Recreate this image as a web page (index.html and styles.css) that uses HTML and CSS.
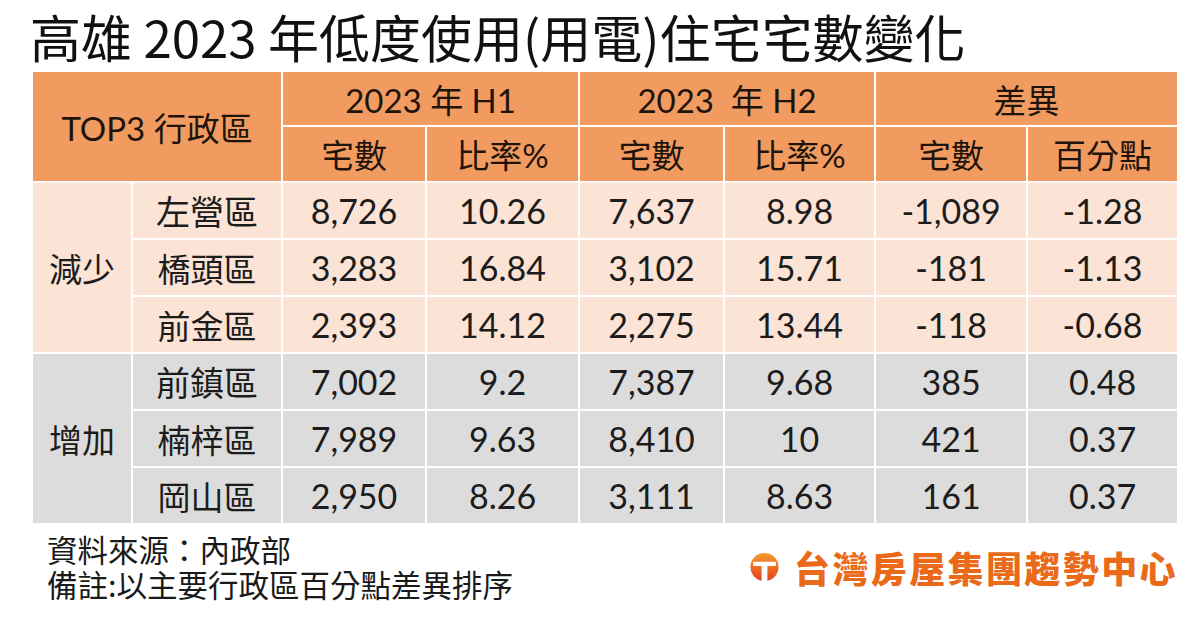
FILE: index.html
```html
<!DOCTYPE html>
<html lang="zh-Hant">
<head>
<meta charset="utf-8">
<link rel="stylesheet" href="styles.css">
</head>
<body>
<div class="page">
  <h1 class="title">高雄 2023 年低度使用(用電)住宅宅數變化</h1>
  <table class="data">
    <colgroup>
      <col style="width:100px"><col style="width:150px">
      <col style="width:144px"><col style="width:153px">
      <col style="width:145px"><col style="width:151px">
      <col style="width:152px"><col style="width:151px">
    </colgroup>
    <thead>
      <tr class="h1row">
        <th colspan="2" rowspan="2">TOP3 行政區</th>
        <th colspan="2">2023 年 H1</th>
        <th colspan="2">2023&nbsp; 年 H2</th>
        <th colspan="2">差異</th>
      </tr>
      <tr class="h2row">
        <th>宅數</th><th>比率%</th>
        <th>宅數</th><th>比率%</th>
        <th>宅數</th><th>百分點</th>
      </tr>
    </thead>
    <tbody class="dec">
      <tr><td rowspan="3" class="grp">減少</td><td>左營區</td><td>8,726</td><td>10.26</td><td>7,637</td><td>8.98</td><td>-1,089</td><td>-1.28</td></tr>
      <tr><td>橋頭區</td><td>3,283</td><td>16.84</td><td>3,102</td><td>15.71</td><td>-181</td><td>-1.13</td></tr>
      <tr><td>前金區</td><td>2,393</td><td>14.12</td><td>2,275</td><td>13.44</td><td>-118</td><td>-0.68</td></tr>
    </tbody>
    <tbody class="inc">
      <tr><td rowspan="3" class="grp">增加</td><td>前鎮區</td><td>7,002</td><td>9.2</td><td>7,387</td><td>9.68</td><td>385</td><td>0.48</td></tr>
      <tr><td>楠梓區</td><td>7,989</td><td>9.63</td><td>8,410</td><td>10</td><td>421</td><td>0.37</td></tr>
      <tr><td>岡山區</td><td>2,950</td><td>8.26</td><td>3,111</td><td>8.63</td><td>161</td><td>0.37</td></tr>
    </tbody>
  </table>
  <div class="footer">
    <div class="notes">
      <p>資料來源：內政部</p>
      <p>備註:以主要行政區百分點差異排序</p>
    </div>
    <div class="logo">
      <svg class="logo-mark" width="29" height="30" viewBox="0 0 30 30" aria-hidden="true">
        <defs>
          <linearGradient id="lg" x1="0" y1="0" x2="0" y2="1">
            <stop offset="0" stop-color="#F79A2E"/>
            <stop offset="1" stop-color="#E0451C"/>
          </linearGradient>
        </defs>
        <circle cx="15" cy="15" r="14.5" fill="url(#lg)"/>
        <path d="M3.2 9.5 H26.8 V14 H18 V29.6 H12 V14 H3.2 Z" fill="#fff"/>
      </svg>
      <span class="logo-text">台灣房屋集團趨勢中心</span>
    </div>
  </div>
</div>
</body>
</html>
```

FILE: styles.css
```css
html, body {
  margin: 0;
  padding: 0;
  background: #ffffff;
}

.page {
  width: 1200px;
  height: 620px;
  padding: 7px 0 0 0;
  box-sizing: border-box;
  font-family: "Lato", "Noto Sans CJK TC", sans-serif;
  color: #1c1c1c;
}

.title {
  margin: 0 0 0 30px;
  font-family: "Noto Sans CJK TC", sans-serif;
  font-weight: 400;
  font-size: 51px;
  line-height: 59px;
  color: #111;
  letter-spacing: 0;
}

.data {
  margin: 4px 0 0 31px;
  border-collapse: collapse;
  table-layout: fixed;
  width: 1148px;
  font-size: 34px;
}

.data th,
.data td {
  border: 2px solid #ffffff;
  padding: 0;
  text-align: center;
  vertical-align: middle;
  font-weight: 400;
  white-space: nowrap;
}

.data th {
  background: #F19B60;
  color: #1f140c;
  font-size: 33px;
}

.grp,
.data tbody td:first-child:not(:only-child) {
  font-size: 33px;
}

.h1row th { height: 53px; }
.h2row th { height: 54px; }

.data tbody td { height: 55px; }

.dec td { background: #FBE3D5; }
.inc td { background: #DCDCDC; }

.footer {
  display: flex;
  justify-content: space-between;
  align-items: center;
  margin: 7px 22px 0 47px;
}

.notes p {
  margin: 0;
  font-family: "Noto Sans CJK TC", sans-serif;
  font-size: 30.5px;
  line-height: 35px;
  color: #1a1a1a;
}

.logo {
  display: flex;
  align-items: center;
  gap: 15px;
}

.logo-mark {
  display: block;
}

.logo-text {
  font-family: "Noto Sans CJK TC", sans-serif;
  font-weight: 900;
  font-size: 36px;
  line-height: 40px;
  color: #EA6A19;
  letter-spacing: 2.4px;
}
```
